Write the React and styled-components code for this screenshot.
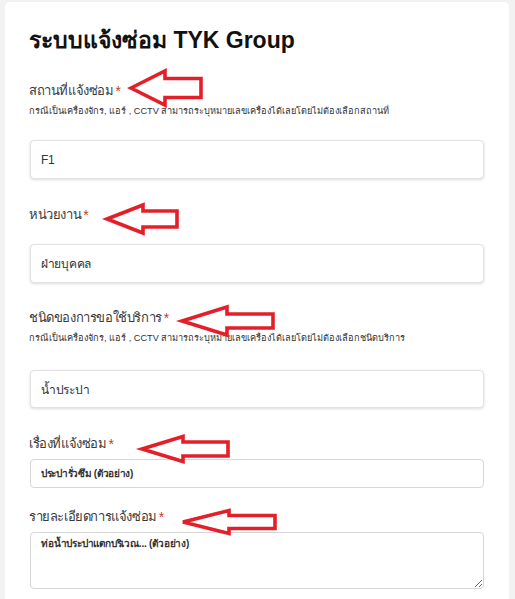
import React from "react";
import styled, { createGlobalStyle } from "styled-components";

const Global = createGlobalStyle`
  html, body { margin: 0; padding: 0; background: #f2f2f2; }
  body { font-family: "Liberation Sans", "Noto Sans", "DejaVu Sans", sans-serif; color: #333; }
  * { box-sizing: border-box; }
`;

const Page = styled.div`
  padding: 2px 6px 0 5px;
  min-height: 599px;
`;

const Card = styled.div`
  background: #fff;
  border-radius: 5px;
  padding: 24px 25px 20px 24px;
  min-height: 620px;
`;

const Title = styled.h1`
  margin: 0 0 27px 0;
  font-size: 23px;
  line-height: 28px;
  font-weight: bold;
  color: #111;
`;

const Field = styled.div`
  display: flex;
  flex-direction: column;
  margin-top: ${(p) => p.$mt || 0}px;
`;

const LabelRow = styled.div`
  position: relative;
  height: 20px;
  line-height: 20px;
  font-size: 13px;
  letter-spacing: -0.4px;
  color: #3a3a3a;
  display: flex;
  align-items: center;
`;

const Star = styled.span`
  color: #c0392b;
  margin-left: 2px;
  font-size: 14px;
`;

const Hint = styled.div`
  margin-top: 3px;
  font-size: 9.2px;
  line-height: 14px;
  color: #333;
`;

const Input = styled.input`
  display: block;
  margin-top: ${(p) => p.$mt}px;
  margin-left: 1px;
  width: 454px;
  height: ${(p) => p.$h}px;
  border: 1px solid ${(p) => (p.$flat ? "#d6d6d6" : "#e2e2e2")};
  border-radius: 4px;
  box-shadow: ${(p) => (p.$flat ? "none" : "0 1px 3px rgba(0,0,0,0.14)")};
  padding: 0 10px;
  font-family: inherit;
  font-size: ${(p) => (p.$bold ? 10 : 12)}px;
  letter-spacing: -0.3px;
  font-weight: ${(p) => (p.$bold ? "bold" : "normal")};
  color: #333;
  background: #fff;
  outline: none;
`;

const TextArea = styled.textarea`
  display: block;
  margin-top: 5px;
  margin-left: 1px;
  width: 454px;
  height: 57px;
  border: 1px solid #d6d6d6;
  border-radius: 4px;
  padding: 3px 10px;
  font-family: inherit;
  font-size: 10px;
  letter-spacing: -0.2px;
  font-weight: bold;
  color: #333;
  background: #fff;
  resize: vertical;
  outline: none;
`;

const ArrowSvg = styled.svg`
  position: absolute;
  left: ${(p) => p.$left}px;
  top: 50%;
  transform: translateY(calc(-50% + ${(p) => p.$dy}px));
  overflow: visible;
`;

function Arrow({ left, dy = 0, w, h, t, lh }) {
  const pts = [
    [0, h / 2],
    [lh, 0],
    [lh, (h - t) / 2],
    [w, (h - t) / 2],
    [w, (h + t) / 2],
    [lh, (h + t) / 2],
    [lh, h],
  ]
    .map((p) => p.join(","))
    .join(" ");
  return (
    <ArrowSvg $left={left} $dy={dy} width={w} height={h} viewBox={`0 0 ${w} ${h}`}>
      <polygon
        points={pts}
        fill="none"
        stroke="#e3202a"
        strokeWidth="3.6"
        strokeLinejoin="miter"
      />
    </ArrowSvg>
  );
}

export default function App() {
  return (
    <>
      <Global />
      <Page>
        <Card>
          <Title>ระบบแจ้งซ่อม TYK Group</Title>

          <Field>
            <LabelRow>
              สถานที่แจ้งซ่อม<Star>*</Star>
              <Arrow left={102} dy={-3} w={70} h={34} t={19} lh={34} />
            </LabelRow>
            <Hint>กรณีเป็นเครื่องจักร, แอร์ , CCTV สามารถระบุหมายเลขเครื่องได้เลยโดยไม่ต้องเลือกสถานที่</Hint>
            <Input $mt={22} $h={39} defaultValue="F1" readOnly />
          </Field>

          <Field $mt={26}>
            <LabelRow>
              หน่วยงาน<Star>*</Star>
              <Arrow left={78} dy={4} w={70} h={28} t={16} lh={36} />
            </LabelRow>
            <Input $mt={19} $h={39} defaultValue="ฝ่ายบุคคล" readOnly />
          </Field>

          <Field $mt={25}>
            <LabelRow>
              ชนิดของการขอใช้บริการ<Star>*</Star>
              <Arrow left={153} dy={3} w={91} h={28} t={14} lh={45} />
            </LabelRow>
            <Hint>กรณีเป็นเครื่องจักร, แอร์ , CCTV สามารถระบุหมายเลขเครื่องได้เลยโดยไม่ต้องเลือกชนิดบริการ</Hint>
            <Input $mt={25} $h={38} defaultValue="น้ำประปา" readOnly />
          </Field>

          <Field $mt={26}>
            <LabelRow>
              เรื่องที่แจ้งซ่อม<Star>*</Star>
              <Arrow left={113} dy={5} w={86} h={25} t={14} lh={41} />
            </LabelRow>
            <Input $mt={5} $h={29} $flat $bold defaultValue="ประปารั่วซึม (ตัวอย่าง)" readOnly />
          </Field>

          <Field $mt={19}>
            <LabelRow>
              รายละเอียดการแจ้งซ่อม<Star>*</Star>
              <Arrow left={154} dy={5} w={92} h={23} t={13} lh={46} />
            </LabelRow>
            <TextArea defaultValue="ท่อน้ำประปาแตกบริเวณ... (ตัวอย่าง)" readOnly />
          </Field>
        </Card>
      </Page>
    </>
  );
}
